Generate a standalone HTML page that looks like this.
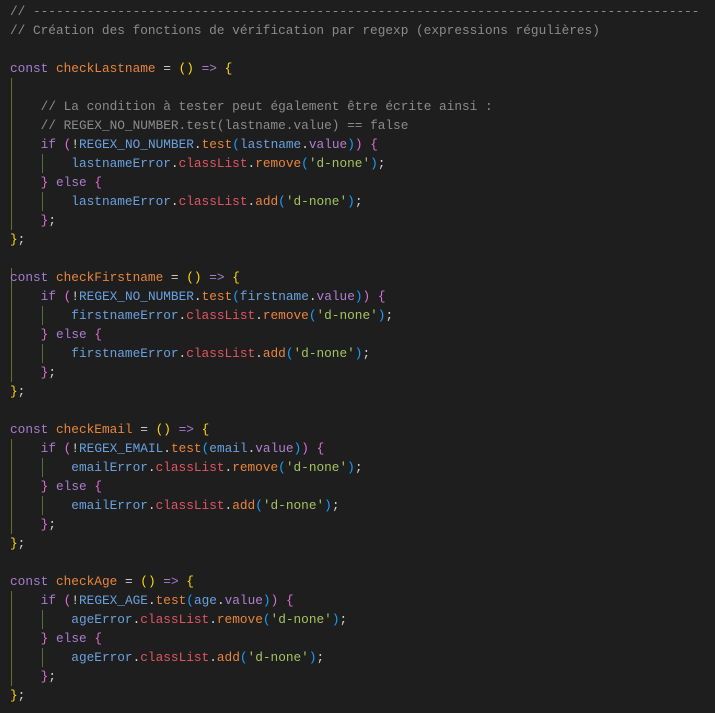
<!DOCTYPE html>
<html><head><meta charset="utf-8"><style>
html,body{margin:0;padding:0;background:#1e1e1e;}
body{width:715px;height:713px;overflow:hidden;position:relative;}
pre{margin:0;position:absolute;left:10px;top:2px;font-family:"Liberation Mono",monospace;font-size:12.78px;line-height:19px;color:#d4d4d4;white-space:pre;}
.c{color:#8b8b8b}.k{color:#a77ccf}.f{color:#e8853a}.y{color:#ffd700}.m{color:#da70d6}.b{color:#179fff}
.v{color:#6aa0dd}.p{color:#b07fd0}.r{color:#e05561}.s{color:#a6c25f}.o{color:#c8c8c8}
.g{position:absolute;width:1px;}
</style></head><body>
<div class="g" style="left:11px;top:78px;height:152px;background:#6e6e2a"></div>
<div class="g" style="left:42px;top:154px;height:19px;background:#55703a"></div>
<div class="g" style="left:42px;top:192px;height:19px;background:#55703a"></div>
<div class="g" style="left:11px;top:268px;height:114px;background:#6e6e2a"></div>
<div class="g" style="left:42px;top:306px;height:19px;background:#55703a"></div>
<div class="g" style="left:42px;top:344px;height:19px;background:#55703a"></div>
<div class="g" style="left:11px;top:439px;height:95px;background:#6e6e2a"></div>
<div class="g" style="left:42px;top:458px;height:19px;background:#55703a"></div>
<div class="g" style="left:42px;top:496px;height:19px;background:#55703a"></div>
<div class="g" style="left:11px;top:591px;height:95px;background:#6e6e2a"></div>
<div class="g" style="left:42px;top:610px;height:19px;background:#55703a"></div>
<div class="g" style="left:42px;top:648px;height:19px;background:#55703a"></div>
<pre><span class="c">// ---------------------------------------------------------------------------------------</span>
<span class="c">// Création des fonctions de vérification par regexp (expressions régulières)</span>

<span class="k">const</span> <span class="f">checkLastname</span> <span class="o">=</span> <span class="y">()</span> <span class="k">=&gt;</span> <span class="y">{</span>

    <span class="c">// La condition à tester peut également être écrite ainsi :</span>
    <span class="c">// REGEX_NO_NUMBER.test(lastname.value) == false</span>
    <span class="k">if</span> <span class="m">(</span>!<span class="v">REGEX_NO_NUMBER</span>.<span class="f">test</span><span class="b">(</span><span class="v">lastname</span>.<span class="p">value</span><span class="b">)</span><span class="m">)</span> <span class="m">{</span>
        <span class="v">lastnameError</span>.<span class="r">classList</span>.<span class="f">remove</span><span class="b">(</span><span class="s">'d-none'</span><span class="b">)</span>;
    <span class="m">}</span> <span class="k">else</span> <span class="m">{</span>
        <span class="v">lastnameError</span>.<span class="r">classList</span>.<span class="f">add</span><span class="b">(</span><span class="s">'d-none'</span><span class="b">)</span>;
    <span class="m">}</span>;
<span class="y">}</span>;

<span class="k">const</span> <span class="f">checkFirstname</span> <span class="o">=</span> <span class="y">()</span> <span class="k">=&gt;</span> <span class="y">{</span>
    <span class="k">if</span> <span class="m">(</span>!<span class="v">REGEX_NO_NUMBER</span>.<span class="f">test</span><span class="b">(</span><span class="v">firstname</span>.<span class="p">value</span><span class="b">)</span><span class="m">)</span> <span class="m">{</span>
        <span class="v">firstnameError</span>.<span class="r">classList</span>.<span class="f">remove</span><span class="b">(</span><span class="s">'d-none'</span><span class="b">)</span>;
    <span class="m">}</span> <span class="k">else</span> <span class="m">{</span>
        <span class="v">firstnameError</span>.<span class="r">classList</span>.<span class="f">add</span><span class="b">(</span><span class="s">'d-none'</span><span class="b">)</span>;
    <span class="m">}</span>;
<span class="y">}</span>;

<span class="k">const</span> <span class="f">checkEmail</span> <span class="o">=</span> <span class="y">()</span> <span class="k">=&gt;</span> <span class="y">{</span>
    <span class="k">if</span> <span class="m">(</span>!<span class="v">REGEX_EMAIL</span>.<span class="f">test</span><span class="b">(</span><span class="v">email</span>.<span class="p">value</span><span class="b">)</span><span class="m">)</span> <span class="m">{</span>
        <span class="v">emailError</span>.<span class="r">classList</span>.<span class="f">remove</span><span class="b">(</span><span class="s">'d-none'</span><span class="b">)</span>;
    <span class="m">}</span> <span class="k">else</span> <span class="m">{</span>
        <span class="v">emailError</span>.<span class="r">classList</span>.<span class="f">add</span><span class="b">(</span><span class="s">'d-none'</span><span class="b">)</span>;
    <span class="m">}</span>;
<span class="y">}</span>;

<span class="k">const</span> <span class="f">checkAge</span> <span class="o">=</span> <span class="y">()</span> <span class="k">=&gt;</span> <span class="y">{</span>
    <span class="k">if</span> <span class="m">(</span>!<span class="v">REGEX_AGE</span>.<span class="f">test</span><span class="b">(</span><span class="v">age</span>.<span class="p">value</span><span class="b">)</span><span class="m">)</span> <span class="m">{</span>
        <span class="v">ageError</span>.<span class="r">classList</span>.<span class="f">remove</span><span class="b">(</span><span class="s">'d-none'</span><span class="b">)</span>;
    <span class="m">}</span> <span class="k">else</span> <span class="m">{</span>
        <span class="v">ageError</span>.<span class="r">classList</span>.<span class="f">add</span><span class="b">(</span><span class="s">'d-none'</span><span class="b">)</span>;
    <span class="m">}</span>;
<span class="y">}</span>;</pre>
</body></html>
